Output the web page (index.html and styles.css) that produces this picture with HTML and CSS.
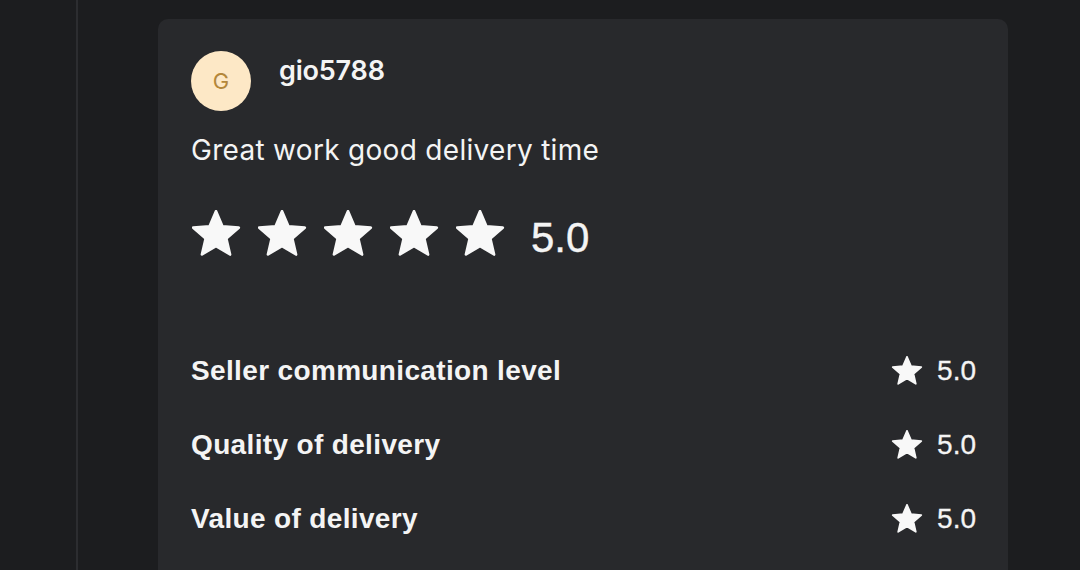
FILE: index.html
```html
<!DOCTYPE html>
<html lang="en">
  <head>
    <meta charset="UTF-8" />
    <meta name="viewport" content="width=device-width, initial-scale=1.0" />
    <title>review card</title>
    <link rel="stylesheet" href="styles.css">
  </head>
  <body>
    <div class="page">
      <aside class="side-rail"></aside>
      <main class="content">
        <article class="review">
          <header class="review-head">
            <span class="avatar">G</span>
            <span class="username">gio5788</span>
          </header>
          <p class="comment">Great work good delivery time</p>
          <div class="overall">
            <div class="stars">
              <svg class="star big" viewBox="1 1.5 22 21"><path d="M12 17.27L18.18 21l-1.64-7.03L22 9.24l-7.19-.61L12 2 9.19 8.63 2 9.24l5.46 4.73L5.82 21z"/></svg>
              <svg class="star big" viewBox="1 1.5 22 21"><path d="M12 17.27L18.18 21l-1.64-7.03L22 9.24l-7.19-.61L12 2 9.19 8.63 2 9.24l5.46 4.73L5.82 21z"/></svg>
              <svg class="star big" viewBox="1 1.5 22 21"><path d="M12 17.27L18.18 21l-1.64-7.03L22 9.24l-7.19-.61L12 2 9.19 8.63 2 9.24l5.46 4.73L5.82 21z"/></svg>
              <svg class="star big" viewBox="1 1.5 22 21"><path d="M12 17.27L18.18 21l-1.64-7.03L22 9.24l-7.19-.61L12 2 9.19 8.63 2 9.24l5.46 4.73L5.82 21z"/></svg>
              <svg class="star big" viewBox="1 1.5 22 21"><path d="M12 17.27L18.18 21l-1.64-7.03L22 9.24l-7.19-.61L12 2 9.19 8.63 2 9.24l5.46 4.73L5.82 21z"/></svg>
            </div>
            <span class="overall-score">5.0</span>
          </div>

          <ul class="breakdown">
            <li class="row">
              <span class="label">Seller communication level</span>
              <span class="score">
                <svg class="star small" viewBox="1 1.5 22 21"><path d="M12 17.27L18.18 21l-1.64-7.03L22 9.24l-7.19-.61L12 2 9.19 8.63 2 9.24l5.46 4.73L5.82 21z"/></svg>
                5.0
              </span>
            </li>
            <li class="row">
              <span class="label">Quality of delivery</span>
              <span class="score">
                <svg class="star small" viewBox="1 1.5 22 21"><path d="M12 17.27L18.18 21l-1.64-7.03L22 9.24l-7.19-.61L12 2 9.19 8.63 2 9.24l5.46 4.73L5.82 21z"/></svg>
                5.0
              </span>
            </li>
            <li class="row">
              <span class="label">Value of delivery</span>
              <span class="score">
                <svg class="star small" viewBox="1 1.5 22 21"><path d="M12 17.27L18.18 21l-1.64-7.03L22 9.24l-7.19-.61L12 2 9.19 8.63 2 9.24l5.46 4.73L5.82 21z"/></svg>
                5.0
              </span>
            </li>
          </ul>
        </article>
      </main>
    </div>
  </body>
</html>
```

FILE: styles.css
```css
body {
  font-family: "Liberation Sans", Arial, sans-serif;
  margin: 0;
  padding: 0;
  height: 570px;
  overflow: hidden;
  background: #1c1d1f;
  color: #f4f4f4;
}

.page {
  display: flex;
  height: 100%;
}

.side-rail {
  width: 76px;
  flex: 0 0 76px;
  border-right: 2px solid #2c2d30;
}

.content {
  padding: 19px 0 0 80px;
  height: 551px;
  overflow: hidden;
}

.review {
  width: 850px;
  box-sizing: border-box;
  height: 560px;
  padding: 32px 32px 0 33px;
  background: #28292c;
  border-radius: 10px;
}

.review-head {
  display: flex;
  align-items: flex-start;
  gap: 28px;
}

.avatar {
  width: 60px;
  height: 60px;
  border-radius: 50%;
  background: #fde8c6;
  color: #b4873a;
  display: flex;
  justify-content: center;
  align-items: center;
  font-family: "Inter", sans-serif;
  font-size: 22px;
  flex: 0 0 60px;
}

.username {
  font-family: "Inter", sans-serif;
  font-weight: 600;
  font-size: 27px;
  margin-top: 3px;
  letter-spacing: -0.2px;
}

.comment {
  font-family: "Inter", sans-serif;
  font-size: 28px;
  margin: 20px 0 0;
  padding-top: 2px;
  letter-spacing: 0.3px;
}

.overall {
  display: flex;
  align-items: center;
  margin-top: 39px;
}

.stars {
  display: flex;
  gap: 16px;
}

.star {
  fill: #f8f8f8;
  stroke: #f8f8f8;
  stroke-width: 1.2;
  stroke-linejoin: round;
}

.star.big {
  width: 50px;
  height: 48px;
}

.overall-score {
  font-size: 42px;
  margin-left: 26px;
  margin-top: 8px;
  -webkit-text-stroke: 0.4px #f4f4f4;
}

.breakdown {
  list-style: none;
  margin: 93px 0 0;
  padding: 0;
  display: flex;
  flex-direction: column;
  gap: 42px;
}

.row {
  display: flex;
  justify-content: space-between;
  align-items: center;
  height: 32px;
}

.label {
  font-size: 28px;
  font-weight: bold;
  letter-spacing: 0.35px;
}

.score {
  display: flex;
  align-items: center;
  gap: 14px;
  font-size: 28px;
  -webkit-text-stroke: 0.3px #f4f4f4;
}

.star.small {
  width: 32px;
  height: 30px;
}
```
